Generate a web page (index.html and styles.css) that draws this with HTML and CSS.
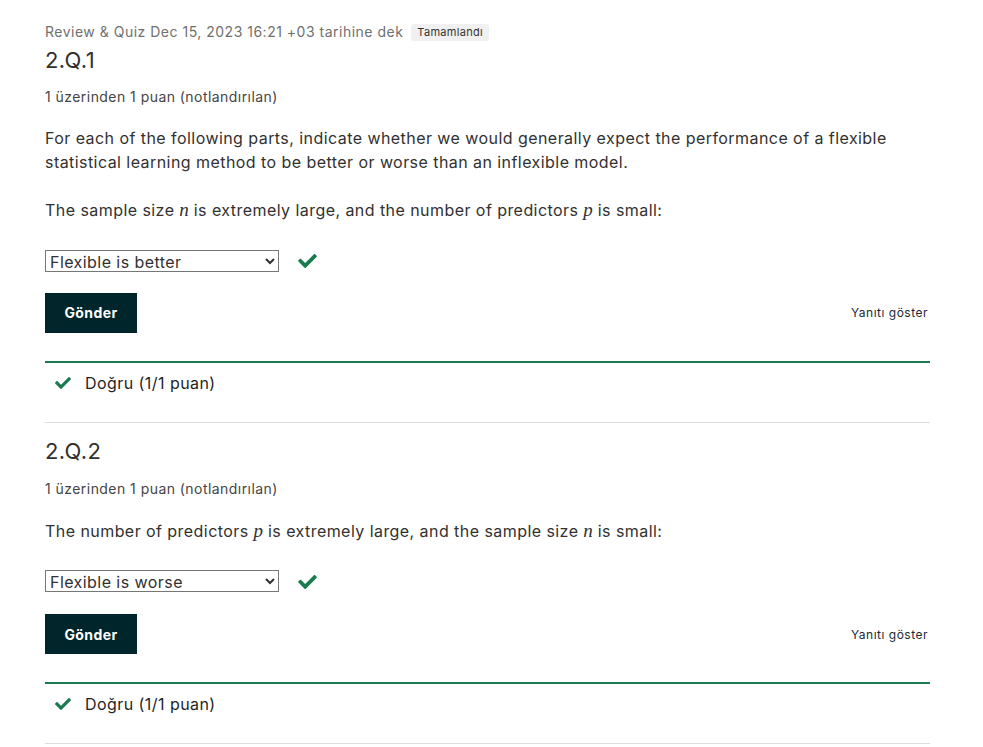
FILE: index.html
```html
<!DOCTYPE html>
<html lang="tr">
<head>
<meta charset="utf-8">
<link rel="stylesheet" href="styles.css">
</head>
<body>
<div class="page">
  <div class="due">Review &amp; Quiz Dec 15, 2023 16:21 +03 tarihine dek <span class="badge">Tamamlandı</span></div>

  <section class="problem">
    <h3 class="title">2.Q.1</h3>
    <div class="points">1 üzerinden 1 puan (notlandırılan)</div>
    <p class="text first">For each of the following parts, indicate whether we would generally expect the performance of a flexible statistical learning method to be better or worse than an inflexible model.</p>
    <p class="text">The sample size <span class="math">n</span> is extremely large, and the number of predictors <span class="math">p</span> is small:</p>
    <div class="answer">
      <select class="choice"><option>Flexible is better</option></select>
      <svg class="check" viewBox="0 64 512 384" width="19" height="14"><path d="M173.9 439.4l-166.4-166.4c-10-10-10-26.2 0-36.2l36.2-36.2c10-10 26.2-10 36.2 0L192 312.7 432.1 72.6c10-10 26.2-10 36.2 0l36.2 36.2c10 10 10 26.2 0 36.2l-294.4 294.4c-10 10-26.2 10-36.2 0z"/></svg>
    </div>
    <div class="actions">
      <button class="submit">Gönder</button>
      <span class="show">Yanıtı göster</span>
    </div>
    <div class="result">
      <svg class="check small" viewBox="0 64 512 384" width="16" height="12"><path d="M173.9 439.4l-166.4-166.4c-10-10-10-26.2 0-36.2l36.2-36.2c10-10 26.2-10 36.2 0L192 312.7 432.1 72.6c10-10 26.2-10 36.2 0l36.2 36.2c10 10 10 26.2 0 36.2l-294.4 294.4c-10 10-26.2 10-36.2 0z"/></svg>
      <span>Doğru (1/1 puan)</span>
    </div>
  </section>

  <section class="problem">
    <h3 class="title">2.Q.2</h3>
    <div class="points">1 üzerinden 1 puan (notlandırılan)</div>
    <p class="text first">The number of predictors <span class="math">p</span> is extremely large, and the sample size <span class="math">n</span> is small:</p>
    <div class="answer">
      <select class="choice"><option>Flexible is worse</option></select>
      <svg class="check" viewBox="0 64 512 384" width="19" height="14"><path d="M173.9 439.4l-166.4-166.4c-10-10-10-26.2 0-36.2l36.2-36.2c10-10 26.2-10 36.2 0L192 312.7 432.1 72.6c10-10 26.2-10 36.2 0l36.2 36.2c10 10 10 26.2 0 36.2l-294.4 294.4c-10 10-26.2 10-36.2 0z"/></svg>
    </div>
    <div class="actions">
      <button class="submit">Gönder</button>
      <span class="show">Yanıtı göster</span>
    </div>
    <div class="result">
      <svg class="check small" viewBox="0 64 512 384" width="16" height="12"><path d="M173.9 439.4l-166.4-166.4c-10-10-10-26.2 0-36.2l36.2-36.2c10-10 26.2-10 36.2 0L192 312.7 432.1 72.6c10-10 26.2-10 36.2 0l36.2 36.2c10 10 10 26.2 0 36.2l-294.4 294.4c-10 10-26.2 10-36.2 0z"/></svg>
      <span>Doğru (1/1 puan)</span>
    </div>
  </section>
</div>
</body>
</html>
```

FILE: styles.css
```css
* { box-sizing: border-box; }
html, body { margin: 0; padding: 0; background: #fff; }
body {
  font-family: Inter, "Noto Sans", "Liberation Sans", sans-serif;
  color: #313131;
}
.page {
  width: 885px;
  margin-left: 45px;
  padding-top: 22px;
}
.due {
  font-size: 14px;
  line-height: 20px;
  letter-spacing: 0.5px;
  color: #707070;
  display: flex;
  align-items: center;
  gap: 8px;
}
.badge {
  font-size: 11px;
  line-height: 17px;
  letter-spacing: 0.3px;
  color: #333;
  background: #f0f0f0;
  border-radius: 3px;
  padding: 0 6px;
}
.problem {
  border-bottom: 1px solid #ddd;
  padding-bottom: 27px;
}
.problem + .problem { padding-top: 10px; }
.problem + .problem .points { margin-top: 14px; }
.problem + .problem .text.first { margin-top: 21px; }
.problem + .problem .actions { margin-top: 22px; }
.title {
  margin: 4px 0 0;
  font-size: 22px;
  line-height: 28px;
  font-weight: 400;
  letter-spacing: 0.4px;
  color: #313131;
}
.points {
  margin-top: 13px;
  font-size: 14px;
  line-height: 20px;
  letter-spacing: 0.45px;
  color: #454545;
}
.text {
  margin: 0;
  font-size: 16px;
  line-height: 23.5px;
  letter-spacing: 0.44px;
  color: #313131;
}
.text.first { margin-top: 20px; }
.text + .text { margin-top: 25px; }
.math {
  font-family: "Liberation Serif", "DejaVu Serif", serif;
  font-style: italic;
  font-size: 19px;
  line-height: 0;
  letter-spacing: 0;
}
.answer {
  margin-top: 27px;
  display: flex;
  align-items: center;
  gap: 19px;
  height: 22px;
}
.choice {
  width: 234px;
  height: 22px;
  font-family: Inter, "Noto Sans", sans-serif;
  font-size: 16px;
  letter-spacing: 0.44px;
  color: #313131;
  background: #fff;
  border: 1px solid #767676;
  border-radius: 0;
  padding: 0;
}
.check { fill: #1a7a50; margin-top: 1px; }
.check.small { margin-top: 0; }
.actions {
  margin-top: 21px;
  display: flex;
  align-items: center;
  justify-content: space-between;
}
.submit {
  width: 92px;
  height: 40px;
  background: #00262b;
  color: #fff;
  border: none;
  border-radius: 0;
  font-family: Inter, "Noto Sans", sans-serif;
  font-size: 14px;
  font-weight: 700;
  letter-spacing: 0.4px;
  padding: 0;
}
.show {
  font-size: 12px;
  letter-spacing: 0.5px;
  color: #1b2a36;
  margin-right: 2px;
}
.result {
  margin-top: 28px;
  border-top: 2px solid #1a7a50;
  padding: 8px 0 0 10px;
  display: flex;
  align-items: center;
  gap: 14px;
  font-size: 16px;
  line-height: 24px;
  letter-spacing: 0.44px;
  color: #1f1f1f;
}
```
